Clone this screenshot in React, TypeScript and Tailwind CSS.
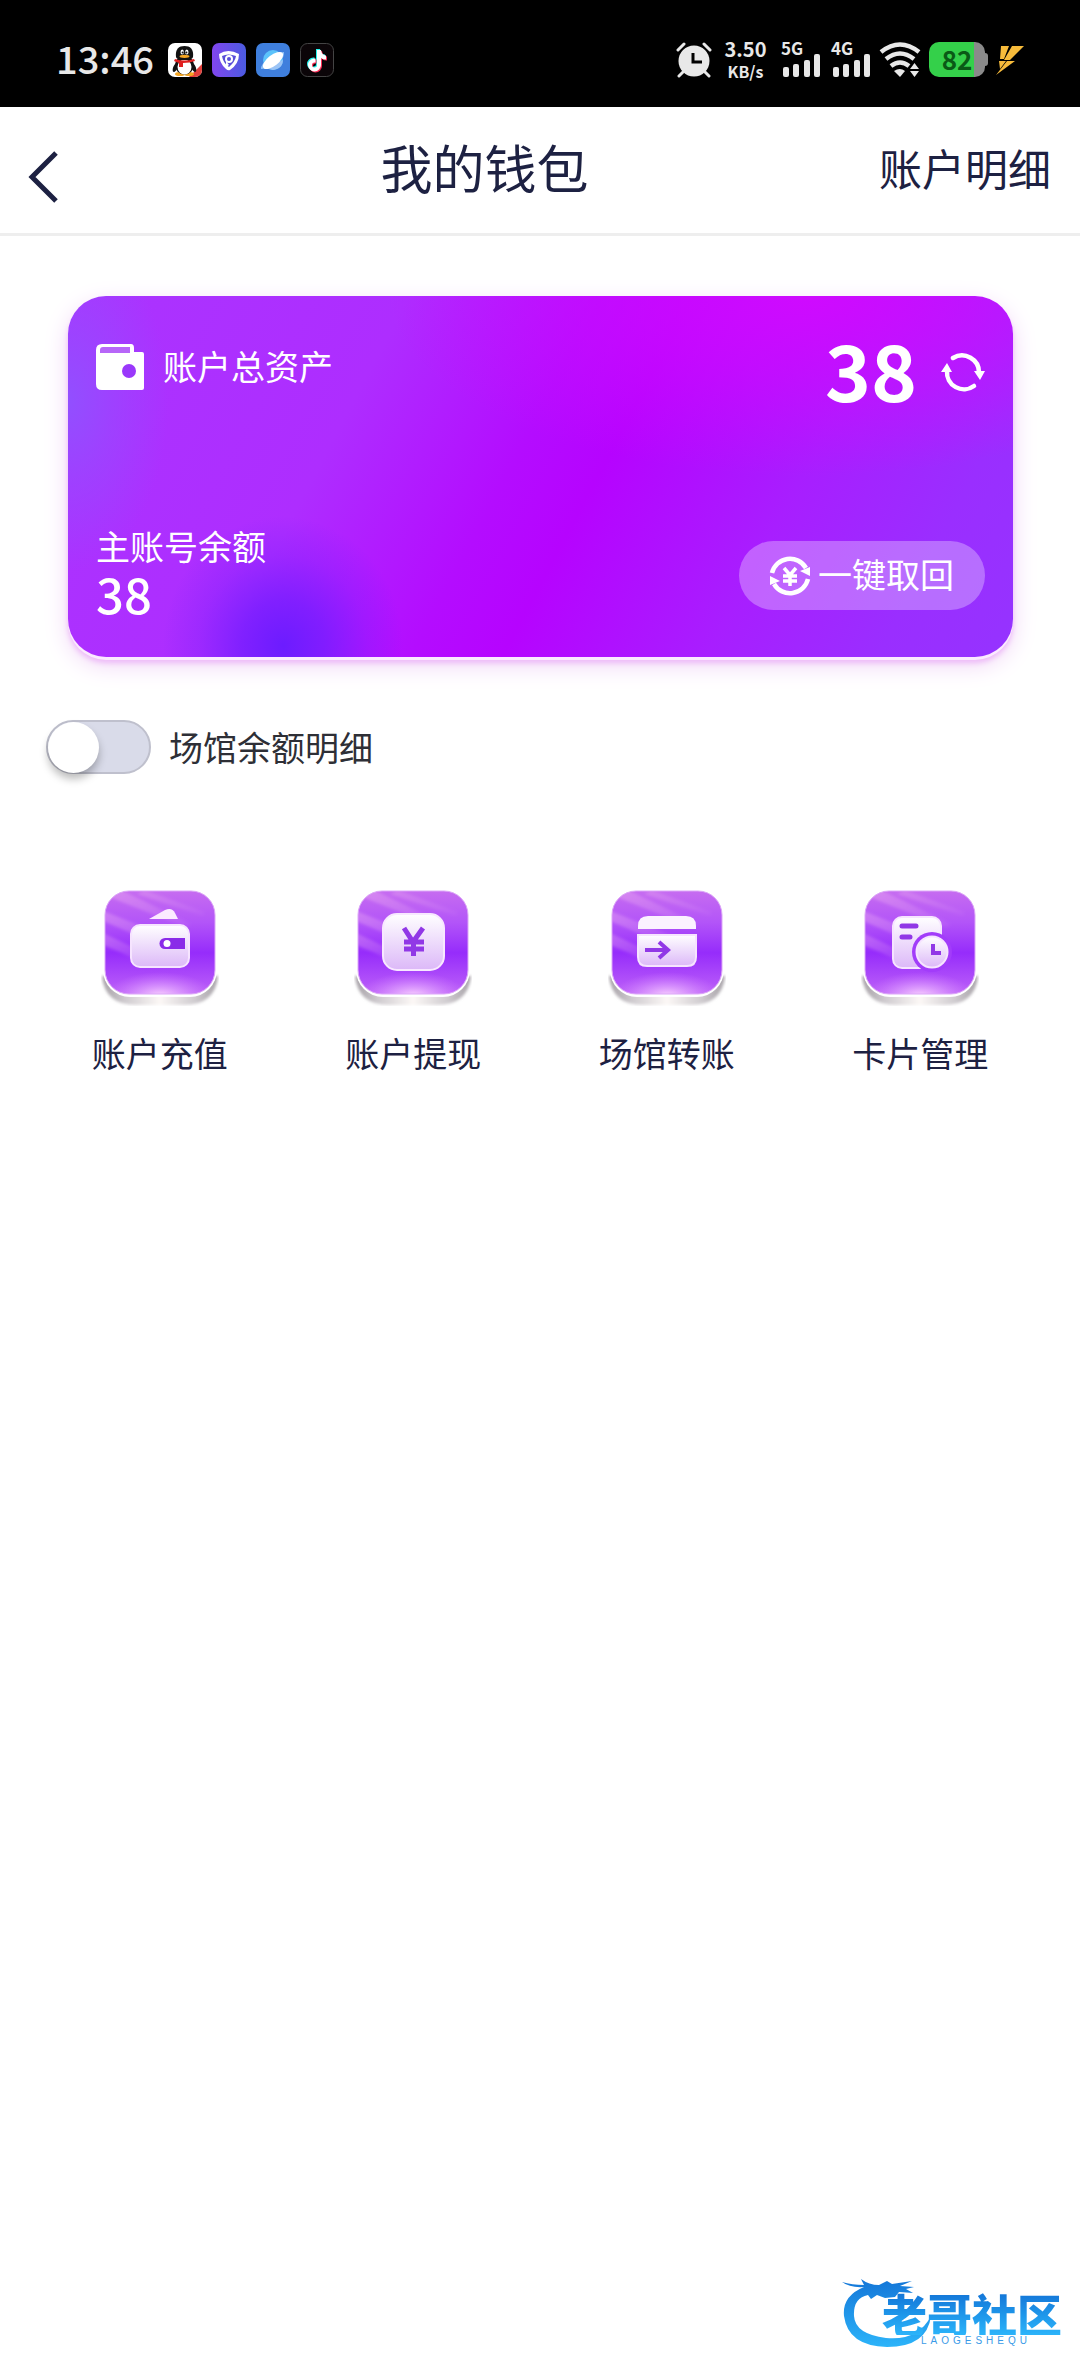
import React from "react";

const cjk = "font-['Noto_Sans_CJK_SC',sans-serif]";

function QQIcon() {
  return (
    <svg viewBox="0 0 34 34" className="size-[34px]" aria-hidden="true">
      <rect width="34" height="34" rx="7" fill="#fff" />
      <path d="M21 34 34 21v6a7 7 0 0 1-7 7z" fill="#e2403c" />
      <path d="M8 20c-4 4-4 9-2 9s3-4 4-6zM25 20c4 4 4 9 2 9s-3-4-4-6z" fill="#111" />
      <ellipse cx="12" cy="31" rx="5" ry="2" fill="#f5a623" />
      <ellipse cx="21" cy="31" rx="5" ry="2" fill="#f5a623" />
      <ellipse cx="16.5" cy="22" rx="9.5" ry="9.5" fill="#111" />
      <ellipse cx="16.5" cy="24" rx="7" ry="7.5" fill="#fff" />
      <path d="M8 14C7 6 11 3 16.5 3S26 6 25 14c-1 4-16 4-17 0z" fill="#111" />
      <ellipse cx="14.2" cy="9" rx="1.7" ry="2.6" fill="#fff" />
      <ellipse cx="18.8" cy="9" rx="1.7" ry="2.6" fill="#fff" />
      <circle cx="14.6" cy="9.5" r="1" fill="#111" />
      <circle cx="18.4" cy="9.5" r="1" fill="#111" />
      <ellipse cx="16.5" cy="13.3" rx="5" ry="1.6" fill="#f5a623" />
      <path d="M7 16q9.5 3 19 0l1 2q-5 2-12 2v4h-4v-4q-3-1-5-2z" fill="#e02020" />
    </svg>
  );
}

function ShieldIcon() {
  return (
    <svg viewBox="0 0 34 34" className="size-[34px]" aria-hidden="true">
      <defs>
        <linearGradient id="shieldBg" x1="0" y1="0" x2="1" y2="0">
          <stop offset="0" stopColor="#8146ee" />
          <stop offset="1" stopColor="#4b5be0" />
        </linearGradient>
      </defs>
      <rect width="34" height="34" rx="7" fill="url(#shieldBg)" />
      <path d="M7 11q9-6 20 0 0 10-9 16-2 1-4-1-7-6-7-15z" fill="#fff" />
      <path d="M10 13q6-3 14 0-1 6-7 11-6-4-7-11z" fill="#5a4fd8" />
      <circle cx="17" cy="16" r="4" fill="#fff" />
      <circle cx="17" cy="16" r="2" fill="#5a4fd8" />
      <path d="M14 18v6l3-2z" fill="#fff" />
    </svg>
  );
}

function PlanetIcon() {
  return (
    <svg viewBox="0 0 34 34" className="size-[34px]" aria-hidden="true">
      <rect width="34" height="34" rx="7" fill="#3f7fdd" />
      <circle cx="17" cy="17" r="10" fill="#5cc3fb" />
      <path d="M27 17a10 10 0 0 1-17 7z" fill="#9cc4f5" />
      <path d="M5 26q0-5 6-9Q20 9 28 9q1 5-5 9-8 8-18 8z" fill="#8fc0f7" />
      <ellipse cx="17" cy="17.5" rx="12" ry="5.5" transform="rotate(-38 17 17.5)" fill="#fff" />
    </svg>
  );
}

function TikTokIcon() {
  const note = "M17 7h4q.5 5 5 5.5v4q-3 0-5-1.5v7a6.5 6.5 0 1 1-6.5-6.5h1v4h-1a2.5 2.5 0 1 0 2.5 2.5z";
  return (
    <svg viewBox="0 0 34 34" className="size-[34px]" aria-hidden="true">
      <rect x=".5" y=".5" width="33" height="33" rx="7" fill="#0b0508" stroke="#444" />
      <path d={note} fill="#25f4ee" transform="translate(-1 -1)" />
      <path d={note} fill="#fe2c55" transform="translate(1 1)" />
      <path d={note} fill="#fff" />
    </svg>
  );
}

function AlarmIcon() {
  return (
    <svg viewBox="0 0 36 36" className="size-[36px]" aria-hidden="true">
      <circle cx="18" cy="19" r="15.5" fill="#e8e8e8" />
      <path d="M2 8 8 2M34 8l-6-6" stroke="#e8e8e8" strokeWidth="3" strokeLinecap="round" />
      <path d="m7 30-4 4M29 30l4 4" stroke="#e8e8e8" strokeWidth="3" strokeLinecap="round" />
      <path d="M17 11v9h9" fill="none" stroke="#000" strokeWidth="3" />
    </svg>
  );
}

function Signal({ label }: { label: string }) {
  return (
    <div className="flex w-[40px] flex-col items-start">
      <span className="text-[17px] leading-[12px] font-bold">{label}</span>
      <svg viewBox="0 0 40 24" className="-mt-px h-[24px] w-[40px]" aria-hidden="true">
        <g fill="#e8e8e8">
          <rect x="2" y="14" width="6" height="10" rx="2" />
          <rect x="12" y="11" width="6" height="13" rx="2" />
          <rect x="23" y="7" width="6" height="17" rx="2" />
          <rect x="33" y="1" width="6" height="23" rx="2" />
        </g>
      </svg>
    </div>
  );
}

function WifiIcon() {
  return (
    <svg viewBox="0 0 42 36" className="h-[36px] w-[42px]" aria-hidden="true">
      <g fill="none" stroke="#e8e8e8" strokeWidth="4.5">
        <path d="M2 10Q21-5 40 10" />
        <path d="M7 17q14-11 28 0" />
        <path d="M12 24q9-7 18 0" />
      </g>
      <path d="M15 29q6-4 11 0l-5 6z" fill="#e8e8e8" />
      <path d="M31 27h9l-4.5-6zM31 29h9l-4.5 6z" fill="#e8e8e8" />
    </svg>
  );
}

function StatusBar() {
  return (
    <div className={`flex h-[107px] items-center justify-between bg-black pt-[12px] pr-[56px] pl-[56px] text-[#e8e8e8] ${cjk}`}>
      <div className="flex items-center gap-[10px]">
        <span className="mr-[4px] pb-[4px] text-[38px] leading-none font-medium">13:46</span>
        <QQIcon />
        <ShieldIcon />
        <PlanetIcon />
        <TikTokIcon />
      </div>
      <div className="flex items-center">
        <AlarmIcon />
        <div className="ml-[12px] flex w-[43px] flex-col items-center text-center font-bold">
          <span className="text-[20px] leading-[22px]">3.50</span>
          <span className="text-[16px] leading-[22px]">KB/s</span>
        </div>
        <div className="ml-[14px] flex gap-[10px]">
          <Signal label="5G" />
          <Signal label="4G" />
        </div>
        <div className="ml-[8px]"><WifiIcon /></div>
        <div className="ml-[8px] flex items-center">
          <div className="flex h-[35px] w-[56px] items-center justify-center rounded-[10px] bg-[linear-gradient(90deg,#34d04a_45px,#8a8a8a_45px)] pb-[2px] text-[26px] leading-none font-bold text-[#0a5a16]">
            82
          </div>
          <div className="h-[13px] w-[3px] rounded-r-[3px] bg-[#8a8a8a]" />
        </div>
        <svg viewBox="0 0 28 30" className="ml-[8px] h-[30px] w-[28px]" aria-hidden="true">
          <path d="M5 1h8L8 14H4zM16 1h12L14 15H8zM3 16h7l-6 8zM11 16h8L0 30z" fill="#f7bb3b" />
        </svg>
      </div>
    </div>
  );
}

function Header() {
  return (
    <header className="flex h-[129px] items-center justify-between border-b-[3px] border-[#eeeeee] bg-white pr-[29px] pl-[28px] text-[#1d2142]">
      <button type="button" aria-label="返回" className="mt-[14px] flex w-[62px] items-center">
        <svg viewBox="0 0 30 52" className="h-[52px] w-[30px]" aria-hidden="true">
          <path d="M28 2 4 26l24 24" fill="none" stroke="#1d2142" strokeWidth="5" />
        </svg>
      </button>
      <h1 className="pb-[6px] text-[52px] leading-none">我的钱包</h1>
      <a href="#details" className="pb-[6px] text-[43px] leading-none">账户明细</a>
    </header>
  );
}

function WalletIcon() {
  return (
    <svg viewBox="0 0 48 46" className="h-[46px] w-[48px]" aria-hidden="true">
      <path d="M6 0h29q3 0 3 4v4h8q2 0 2 2v34q0 2-2 2H6q-6 0-6-6V6q0-6 6-6z" fill="#fff" />
      <path d="M4 9V6q0-3 3-3h27v6z" fill="#b766f8" />
      <circle cx="33" cy="27" r="7" fill="#9a38fb" />
    </svg>
  );
}

function RefreshIcon() {
  return (
    <svg viewBox="0 0 44 40" className="h-[40px] w-[44px]" aria-hidden="true">
      <g fill="none" stroke="#fff" strokeWidth="4.5" strokeLinecap="round">
        <path d="M12 6a17 17 0 0 1 26 15" />
        <path d="M33 34A17 17 0 0 1 6 19" />
      </g>
      <path d="M33 19h11l-5 9zM0 20h11l-5-9z" fill="#fff" />
    </svg>
  );
}

function YenCycleIcon() {
  return (
    <svg viewBox="0 0 42 42" className="size-[42px]" aria-hidden="true">
      <g fill="none" stroke="#fff" strokeWidth="4.5">
        <path d="M3 18a18.500 18.500 0 0 1 34-5" />
        <path d="M39 24a18.500 18.500 0 0 1-34 5" />
      </g>
      <path d="M41 21v-9l-10 4zM1 21v9l10-4z" fill="#fff" />
      <path d="m15 13 6 7 6-7M21 20v11M14 21h14M14 26h14" fill="none" stroke="#fff" strokeWidth="3.5" />
    </svg>
  );
}

function BalanceCard() {
  return (
    <section className="mr-[67px] ml-[68px] mt-[60px] flex h-[361px] flex-col justify-between rounded-[38px] bg-[radial-gradient(ellipse_120px_130px_at_215px_350px,#6c1cff_0%,#6c1cffb0_35%,#6c1cff40_70%,#6c1cff00_100%),radial-gradient(ellipse_100px_170px_at_0px_105px,#924fff_0%,#924fff80_45%,#924fff00_100%),radial-gradient(ellipse_420px_180px_at_740px_0px,#cf0aff_0%,#cf0affa0_40%,#cf0aff00_100%),linear-gradient(118deg,#aa34ff_0%,#ae2dff_30%,#b40cff_47%,#b603ff_55%,#a81eff_73%,#9a2eff_88%,#9533ff_100%)] px-[28px] pt-[40px] pb-[38px] text-white shadow-[0_3px_0_#fbeaff,0_6px_5px_#eebcf8,0_8px_24px_#f0d4f6]">
      <div className="flex items-start justify-between">
        <div className="flex items-center gap-[19px] pt-[7px]">
          <WalletIcon />
          <span className="pb-[2px] text-[34px] leading-[46px]">账户总资产</span>
        </div>
        <div className="flex items-center gap-[24px]">
          <span className="pb-[4px] text-[78px] leading-[64px] font-bold">38</span>
          <button type="button" aria-label="刷新" className="pt-[4px]"><RefreshIcon /></button>
        </div>
      </div>
      <div className="flex items-end justify-between">
        <div className="flex flex-col">
          <span className="text-[34px] leading-[42px]">主账号余额</span>
          <span className="text-[49px] leading-[52px] font-medium">38</span>
        </div>
        <button type="button" className="mb-[9px] flex h-[69px] items-center gap-[7px] rounded-full bg-white/30 pr-[31px] pl-[30px] text-[34px] leading-none">
          <YenCycleIcon />
          <span className="pb-[3px]">一键取回</span>
        </button>
      </div>
    </section>
  );
}

function VenueToggle() {
  return (
    <label className="mx-[46px] mt-[63px] flex items-center gap-[18px] text-[34px] leading-[54px] text-[#2e2f36]">
      <input
        type="checkbox"
        role="switch"
        className="flex h-[54px] w-[105px] appearance-none items-center rounded-full border-2 border-[#bfc0cd] bg-[#d9dbe9] before:block before:size-[51px] before:rounded-full before:bg-white before:shadow-[0_6px_8px_#00000045] before:content-['']"
      />
      场馆余额明细
    </label>
  );
}

function TileDefs() {
  return (
    <svg className="absolute size-0" aria-hidden="true">
      <defs>
        <linearGradient id="tileBg" x1="0" y1="0" x2="0" y2="1">
          <stop offset="0" stopColor="#c66cf0" />
          <stop offset=".3" stopColor="#b355f8" />
          <stop offset=".6" stopColor="#962cfb" />
          <stop offset="1" stopColor="#bd62f8" />
        </linearGradient>
        <radialGradient id="tileGlow" cx=".5" cy=".5" r=".5">
          <stop offset="0" stopColor="#fbd4ff" />
          <stop offset=".5" stopColor="#e0a0ff" stopOpacity=".6" />
          <stop offset="1" stopColor="#d27cff" stopOpacity="0" />
        </radialGradient>
        <linearGradient id="tileRay" x1="0" y1="0" x2="1" y2=".6">
          <stop offset="0" stopColor="#e9a8f2" stopOpacity=".5" />
          <stop offset="1" stopColor="#e9a8f2" stopOpacity="0" />
        </linearGradient>
        <linearGradient id="tileShade" x1="0" y1="0" x2="1" y2="0">
          <stop offset="0" stopColor="#a5a0a6" />
          <stop offset=".2" stopColor="#cfcbcf" />
          <stop offset=".5" stopColor="#fcf8f6" />
          <stop offset=".8" stopColor="#cfcbcf" />
          <stop offset="1" stopColor="#a5a0a6" />
        </linearGradient>
        <linearGradient id="tileFace" x1="0" y1="0" x2="0" y2="1">
          <stop offset="0" stopColor="#fff" />
          <stop offset="1" stopColor="#dcb8f8" />
        </linearGradient>
        <filter id="tileSoft" x="-10%" y="-10%" width="120%" height="120%">
          <feGaussianBlur stdDeviation="1.5" />
        </filter>
        <clipPath id="tileClip">
          <rect x="4" y="1" width="110" height="103" rx="24" />
        </clipPath>
      </defs>
    </svg>
  );
}

function Tile({ children }: { children: React.ReactNode }) {
  return (
    <svg viewBox="0 0 118 116" className="h-[116px] w-[118px]" aria-hidden="true">
      <path d="M1 86q3 29 34 29h48q31 0 34-29z" fill="url(#tileShade)" filter="url(#tileSoft)" />
      <rect x="2" y="2" width="114" height="105" rx="27" fill="#fff" />
      <rect x="4" y="1" width="110" height="103" rx="24" fill="url(#tileBg)" />
      <g clipPath="url(#tileClip)">
        <path d="M0 20 70 48 60 56 0 30zM20 0l70 34-4 4L6 6zM0 42l50 24-8 6L0 54zM44 0l60 22-2 4L36 4z" fill="url(#tileRay)" filter="url(#tileSoft)" />
        <ellipse cx="59" cy="106" rx="54" ry="24" fill="url(#tileGlow)" />
      </g>
      <rect x="4" y="1" width="110" height="103" rx="24" fill="none" stroke="#dca6f8" strokeWidth="1" />
      {children}
    </svg>
  );
}

const actions = [
  {
    label: "账户充值",
    art: (
      <>
        <path d="M48 29 64 20q7-3 10 3l3 6z" fill="#fbeaff" />
        <rect x="30" y="35" width="58" height="42" rx="9" fill="url(#tileFace)" stroke="#f6e4ff" strokeWidth="2" />
        <path d="M64 48h20v11H64a5.500 5.500 0 0 1 0-11z" fill="#8a2be8" />
        <circle cx="66" cy="53.5" r="3.5" fill="#fff" />
      </>
    ),
  },
  {
    label: "账户提现",
    art: (
      <>
        <rect x="29" y="24" width="61" height="56" rx="14" fill="url(#tileFace)" stroke="#f8e8ff" strokeWidth="2" />
        <path d="m50 38 9 14 10-14M59.500 50v16M50 52h20M50 59h20" fill="none" stroke="#9138e6" strokeWidth="5" />
      </>
    ),
  },
  {
    label: "场馆转账",
    art: (
      <>
        <path d="M30 39v-3q0-10 10-10h38q10 0 10 10v3z" fill="#fbf2ff" />
        <path d="M30 45h58v22q0 9-9 9H39q-9 0-9-9z" fill="url(#tileFace)" stroke="#f6e4ff" strokeWidth="2" />
        <path d="M37 60h22M51 52l9 8-9 8" fill="none" stroke="#9138e6" strokeWidth="4" />
      </>
    ),
  },
  {
    label: "卡片管理",
    art: (
      <>
        <rect x="32" y="27" width="48" height="51" rx="9" fill="url(#tileFace)" stroke="#f6e4ff" strokeWidth="2" />
        <path d="M41 36h14M41 47h8" stroke="#9138e6" strokeWidth="5" strokeLinecap="round" />
        <circle cx="71" cy="62" r="20" fill="#a23cfa" />
        <circle cx="71" cy="62" r="15.5" fill="url(#tileFace)" stroke="#f6e4ff" strokeWidth="2" />
        <path d="M72 54v9h8" fill="none" stroke="#9138e6" strokeWidth="4" />
      </>
    ),
  },
];

function Actions() {
  return (
    <nav className="mx-[33px] mt-[116px] grid grid-cols-4">
      <TileDefs />
      {actions.map((a) => (
        <button key={a.label} type="button" className="flex flex-col items-center gap-[24px] text-[34px] leading-[46px] text-[#1d2142]">
          <Tile>{a.art}</Tile>
          {a.label}
        </button>
      ))}
    </nav>
  );
}

function CommunityLogo() {
  return (
    <div className="mt-auto mr-[18px] mb-[26px] flex self-end">
      <svg viewBox="0 0 92 74" className="-mr-[52px] h-[74px] w-[92px]" aria-hidden="true">
        <defs>
          <linearGradient id="dragon" x1="0" y1="0" x2="0" y2="1">
            <stop offset="0" stopColor="#1476d8" />
            <stop offset="1" stopColor="#2cb4fa" />
          </linearGradient>
        </defs>
        <path
          d="M0 6q10 3 22 3l-3-6q8 6 18 6l8-4 5 3 20-3-12 5 14 1-8 2 7 4-14-1-4 5-10 1-8-3-6 4-3-4Q11 22 12 40t32 22q32 3 45-22-4 31-44 31Q6 70 2 40 0 20 22 11 8 12 0 6z"
          fill="url(#dragon)"
        />
      </svg>
      <div className="flex flex-col items-center pt-[17px]">
        <span className="bg-gradient-to-b from-[#1476d8] to-[#2cb4fa] bg-clip-text text-[45px] leading-[42px] font-black text-transparent">老哥社区</span>
        <span className="pl-[8px] font-['Liberation_Sans',sans-serif] text-[10px] leading-[12px] tracking-[4px] text-[#3a9be8]">LAOGESHEQU</span>
      </div>
    </div>
  );
}

export default function App() {
  return (
    <div className={`flex min-h-screen flex-col bg-white ${cjk}`}>
      <StatusBar />
      <Header />
      <main className="flex grow flex-col">
        <BalanceCard />
        <VenueToggle />
        <Actions />
        <CommunityLogo />
      </main>
    </div>
  );
}
